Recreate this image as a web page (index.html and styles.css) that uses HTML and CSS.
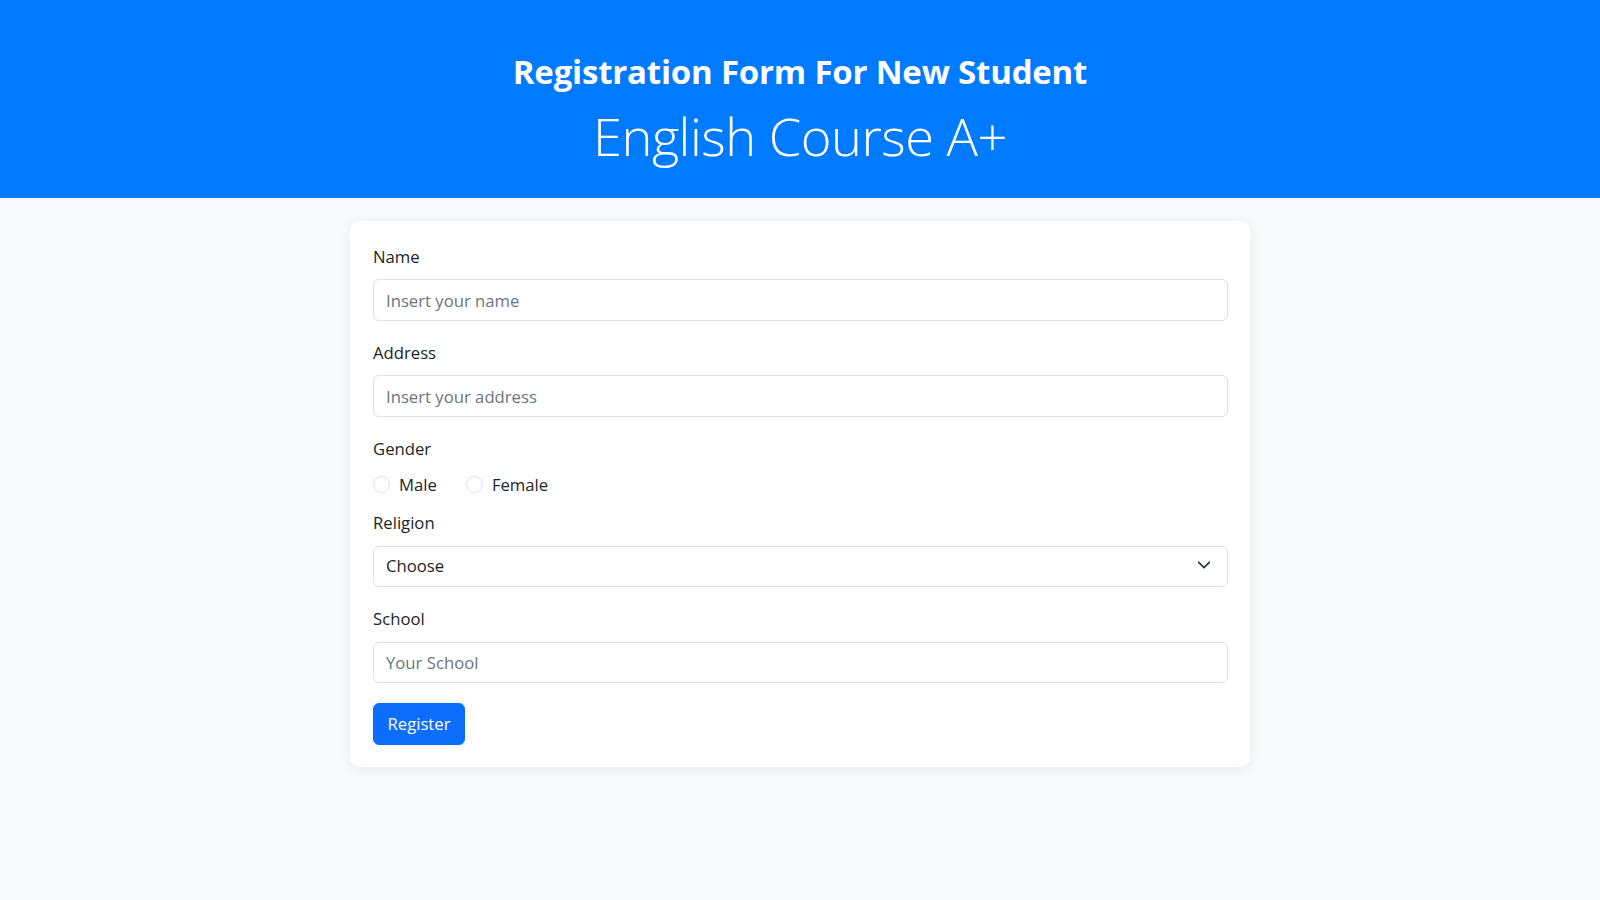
FILE: index.html
```html
<!DOCTYPE html>
<html lang="en">
<head>
<meta charset="utf-8">
<title>Registration Form For New Student</title>
<link rel="stylesheet" href="styles.css">
</head>
<body>
<header class="hero">
  <h2 class="hero-title">Registration Form For New Student</h2>
  <h1 class="hero-sub">English Course A+</h1>
</header>
<main class="page">
  <form class="card">
    <div class="field">
      <label class="label" for="name">Name</label>
      <input class="control" id="name" type="text" placeholder="Insert your name">
    </div>
    <div class="field">
      <label class="label" for="address">Address</label>
      <input class="control" id="address" type="text" placeholder="Insert your address">
    </div>
    <div class="field field-gender">
      <span class="label label-gender">Gender</span>
      <div class="radios">
        <label class="radio"><input class="radio-input" type="radio" name="gender"><span>Male</span></label>
        <label class="radio"><input class="radio-input" type="radio" name="gender"><span>Female</span></label>
      </div>
    </div>
    <div class="field">
      <label class="label" for="religion">Religion</label>
      <div class="select-wrap">
        <select class="control select" id="religion">
          <option>Choose</option>
        </select>
        <svg class="chevron" viewBox="0 0 16 16" width="16" height="16" aria-hidden="true"><path d="M2 5l6 6 6-6" fill="none" stroke="#343a40" stroke-width="2" stroke-linecap="round" stroke-linejoin="round"/></svg>
      </div>
    </div>
    <div class="field field-last">
      <label class="label" for="school">School</label>
      <input class="control" id="school" type="text" placeholder="Your School">
    </div>
    <button class="btn" type="button">Register</button>
  </form>
</main>
</body>
</html>
```
FILE: styles.css
```css
* { box-sizing: border-box; }

html, body {
  margin: 0;
  padding: 0;
}

body {
  background: #f8f9fa;
  color: #212529;
  font-family: "Open Sans", "Noto Sans", sans-serif;
  font-size: 16.7px;
  line-height: 24px;
  min-height: 900px;
}

.hero {
  background: #007bff;
  color: #fff;
  text-align: center;
  height: 198px;
  padding-top: 53px;
}

.hero-title {
  margin: 0;
  font-size: 33px;
  font-weight: 700;
  line-height: 38px;
  letter-spacing: -0.2px;
}

.hero-sub {
  margin: 12px 0 0;
  font-size: 52.4px;
  font-weight: 300;
  line-height: 66px;
  letter-spacing: -0.5px;
}

.page {
  display: flex;
  justify-content: center;
  padding-top: 23px;
}

.card {
  width: 900px;
  background: #fff;
  border-radius: 10px;
  box-shadow: 0 2px 12px rgba(0, 0, 0, 0.06);
  padding: 24px 22px 22px 23px;
}

.field {
  margin-bottom: 20.3px;
}

.field-last {
  margin-bottom: 19.7px;
}

.label {
  display: block;
  margin-bottom: 10.4px;
  color: #212529;
}

.control {
  display: block;
  width: 100%;
  height: 41.3px;
  padding: 0 12px;
  font: inherit;
  color: #212529;
  background: #fff;
  border: 1px solid #dee2e6;
  border-radius: 6px;
  outline: none;
}

.control::placeholder {
  color: #6c757d;
  opacity: 1;
}

.select-wrap {
  position: relative;
}

.select {
  appearance: none;
  -webkit-appearance: none;
  padding-right: 36px;
}

.chevron {
  position: absolute;
  right: 16px;
  top: 50%;
  margin-top: -8px;
  width: 16px;
  height: 14px;
  pointer-events: none;
}

.field-gender {
  margin-bottom: 14.4px;
}

.label-gender {
  margin-bottom: 12px;
}

.radios {
  display: flex;
  gap: 29px;
  height: 24px;
}

.radio {
  display: flex;
  align-items: center;
  gap: 9px;
}

.radio-input {
  appearance: none;
  -webkit-appearance: none;
  margin: 0;
  width: 17px;
  height: 17px;
  border: 1px solid #dee2e6;
  border-radius: 50%;
  background: #fff;
}

.btn {
  display: block;
  width: 92px;
  height: 42px;
  padding: 0;
  font: inherit;
  color: #fff;
  background: #0d6efd;
  border: 1px solid #0d6efd;
  border-radius: 6px;
  cursor: pointer;
}
```
